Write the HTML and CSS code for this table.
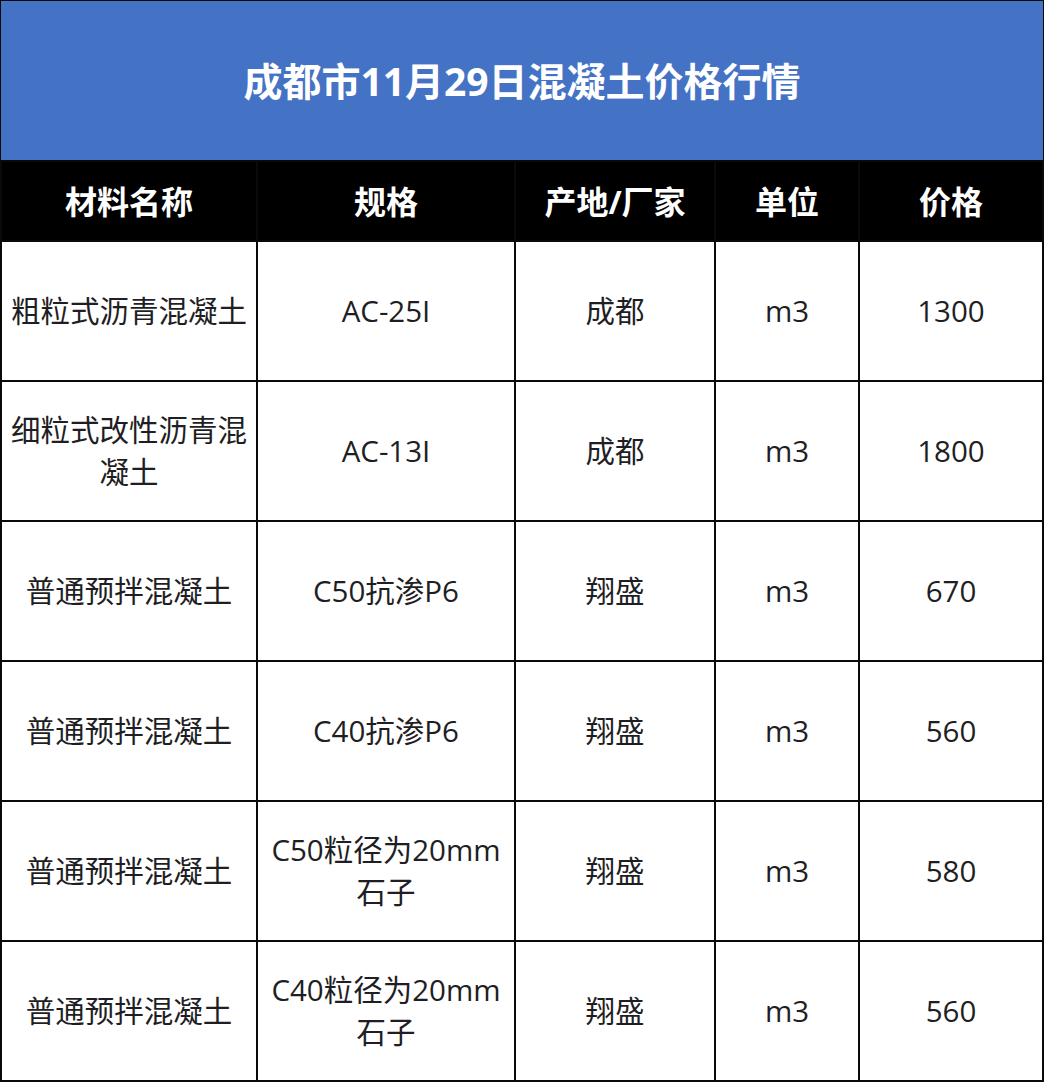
FILE: index.html
```html
<!DOCTYPE html>
<html lang="zh-CN">
<head>
<meta charset="utf-8">
<title>成都市11月29日混凝土价格行情</title>
<link rel="stylesheet" href="styles.css">
</head>
<body>
<div class="sheet">
  <div class="title">成都市11月29日混凝土价格行情</div>
  <div class="head">材料名称</div>
  <div class="head">规格</div>
  <div class="head">产地/厂家</div>
  <div class="head">单位</div>
  <div class="head">价格</div>

  <div class="cell">粗粒式沥青混凝土</div>
  <div class="cell">AC-25I</div>
  <div class="cell">成都</div>
  <div class="cell">m3</div>
  <div class="cell">1300</div>

  <div class="cell">细粒式改性沥青混凝土</div>
  <div class="cell">AC-13I</div>
  <div class="cell">成都</div>
  <div class="cell">m3</div>
  <div class="cell">1800</div>

  <div class="cell">普通预拌混凝土</div>
  <div class="cell">C50抗渗P6</div>
  <div class="cell">翔盛</div>
  <div class="cell">m3</div>
  <div class="cell">670</div>

  <div class="cell">普通预拌混凝土</div>
  <div class="cell">C40抗渗P6</div>
  <div class="cell">翔盛</div>
  <div class="cell">m3</div>
  <div class="cell">560</div>

  <div class="cell">普通预拌混凝土</div>
  <div class="cell">C50粒径为20mm石子</div>
  <div class="cell">翔盛</div>
  <div class="cell">m3</div>
  <div class="cell">580</div>

  <div class="cell">普通预拌混凝土</div>
  <div class="cell">C40粒径为20mm石子</div>
  <div class="cell">翔盛</div>
  <div class="cell">m3</div>
  <div class="cell">560</div>
</div>
</body>
</html>
```

FILE: styles.css
```css
html, body {
  margin: 0;
  padding: 0;
  background: #ffffff;
}

body {
  font-family: "Open Sans", "Noto Sans CJK SC", sans-serif;
  color: #1e1e24;
}

.sheet {
  width: 1044px;
  box-sizing: border-box;
  display: grid;
  grid-template-columns: 254px 256px 198px 142px 182px;
  grid-template-rows: 158px 78px repeat(6, 138px);
  gap: 2px;
  padding: 2px;
  background: #0a0a0a;
}

.title {
  grid-column: 1 / -1;
  margin: -1px -1px 0 -1px;
  background: #4472c4;
  color: #ffffff;
  font-family: "Open Sans", "Noto Sans CJK SC", sans-serif;
  font-weight: 700;
  font-size: 39px;
  display: flex;
  align-items: center;
  justify-content: center;
  padding-bottom: 4px;
}

.head {
  background: #000000;
  color: #ffffff;
  font-weight: 700;
  font-size: 32px;
  display: flex;
  align-items: center;
  justify-content: center;
  padding-bottom: 2px;
}

.cell {
  background: #ffffff;
  font-size: 29.5px;
  line-height: 42px;
  display: flex;
  align-items: center;
  justify-content: center;
  text-align: center;
  padding: 0 2px;
}
```
